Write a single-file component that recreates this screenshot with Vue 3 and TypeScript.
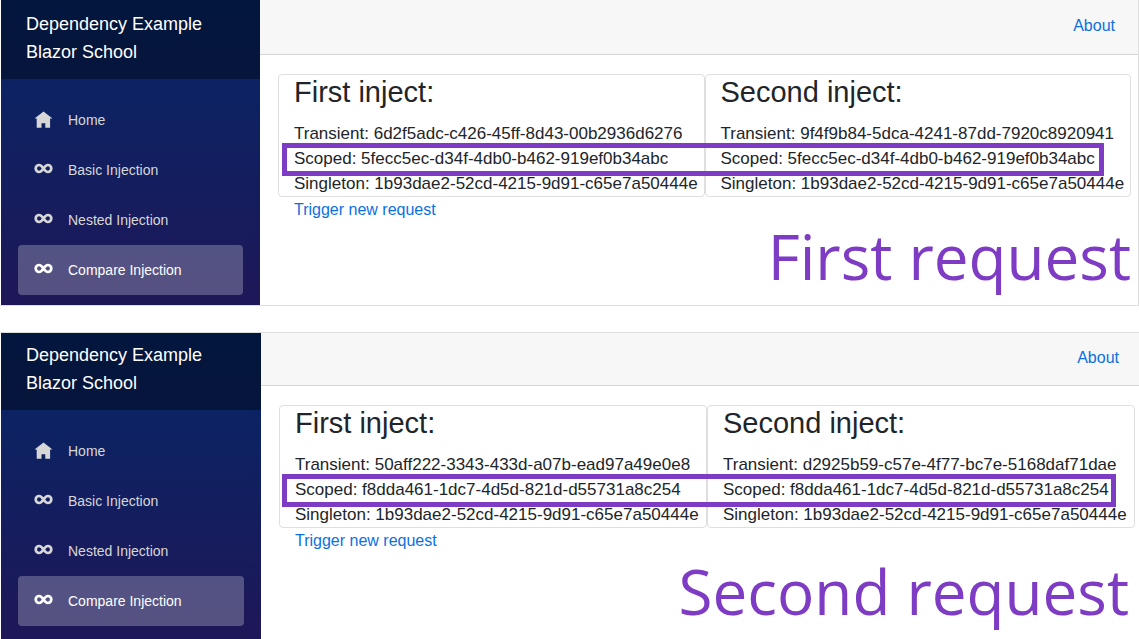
<script setup lang="ts">
interface Entry {
  label: string
  value: string
}
interface Card {
  title: string
  entries: Entry[]
}
interface Panel {
  id: string
  caption: string
  cards: Card[]
}

const singleton = '1b93dae2-52cd-4215-9d91-c65e7a50444e'

function card(title: string, transient: string, scoped: string): Card {
  return {
    title,
    entries: [
      { label: 'Transient', value: transient },
      { label: 'Scoped', value: scoped },
      { label: 'Singleton', value: singleton },
    ],
  }
}

const firstScoped = '5fecc5ec-d34f-4db0-b462-919ef0b34abc'
const secondScoped = 'f8dda461-1dc7-4d5d-821d-d55731a8c254'

const panels: Panel[] = [
  {
    id: 'first',
    caption: 'First request',
    cards: [
      card('First inject:', '6d2f5adc-c426-45ff-8d43-00b2936d6276', firstScoped),
      card('Second inject:', '9f4f9b84-5dca-4241-87dd-7920c8920941', firstScoped),
    ],
  },
  {
    id: 'second',
    caption: 'Second request',
    cards: [
      card('First inject:', '50aff222-3343-433d-a07b-ead97a49e0e8', secondScoped),
      card('Second inject:', 'd2925b59-c57e-4f77-bc7e-5168daf71dae', secondScoped),
    ],
  },
]

const links = [
  { text: 'Home', icon: 'home', active: false },
  { text: 'Basic Injection', icon: 'infinity', active: false },
  { text: 'Nested Injection', icon: 'infinity', active: false },
  { text: 'Compare Injection', icon: 'infinity', active: true },
]
</script>

<template>
  <div class="page">
    <section v-for="panel in panels" :key="panel.id" class="panel" :class="panel.id">
      <aside class="sidebar">
        <a class="brand" href="#">Dependency Example<br />Blazor School</a>
        <nav class="nav">
          <a
            v-for="link in links"
            :key="link.text"
            href="#"
            class="nav-link"
            :class="{ active: link.active }"
          >
            <svg class="icon" viewBox="0 0 19 19" aria-hidden="true">
              <path
                v-if="link.icon === 'home'"
                fill="currentColor"
                d="M9.500 .600 .500 7.600h2.200V16.800h4.800v-4.600h3.800v4.600h4.800V7.600h2.400z"
              />
              <path
                v-else
                fill="none"
                stroke="currentColor"
                stroke-width="2.7"
                d="M9.500 7.500C8 5.300 6.900 4 5.200 4a3.500 3.500 0 0 0 0 7C6.900 11 8 9.700 9.500 7.500C11 5.300 12.100 4 13.800 4a3.500 3.500 0 0 1 0 7C12.100 11 11 9.700 9.500 7.500z"
              />
            </svg>
            <span>{{ link.text }}</span>
          </a>
        </nav>
      </aside>
      <main class="main">
        <header class="top-row"><a href="#">About</a></header>
        <div class="content">
          <div class="cards">
            <article v-for="c in panel.cards" :key="c.title" class="card">
              <h3>{{ c.title }}</h3>
              <div v-for="e in c.entries" :key="e.label" class="entry">{{ e.label }}: {{ e.value }}</div>
            </article>
            <div class="highlight"></div>
          </div>
          <a class="trigger" href="#">Trigger new request</a>
          <p class="caption">{{ panel.caption }}</p>
        </div>
      </main>
    </section>
  </div>
</template>

<style>
body {
  margin: 0;
  background: #fff;
}
</style>

<style scoped>
.page {
  display: flex;
  flex-direction: column;
  gap: 26px;
  height: 100vh;
  overflow: hidden;
  font-family: "Liberation Sans", Arial, sans-serif;
  font-size: 16px;
  line-height: 25px;
  color: #212529;
}
.panel {
  box-sizing: border-box;
  display: flex;
  flex-shrink: 0;
  padding-left: 1px;
}
.first {
  border-right: 1px solid #dedede;
  border-bottom: 1px solid #dedede;
}
.second {
  border-top: 1px solid #dedede;
}
a {
  color: #0c70df;
  text-decoration: none;
}
.sidebar {
  flex: 0 0 259px;
  background: linear-gradient(180deg, #052767 0, #3a0647 640px);
}
.second .sidebar {
  flex-basis: 260px;
}
.brand {
  display: block;
  box-sizing: border-box;
  padding: 10px 25px 13px;
  background: rgba(0, 0, 0, 0.4);
  color: #fff;
  font-size: 18px;
  line-height: 28px;
}
.second .brand {
  padding-top: 8px;
}
.nav {
  padding: 16px 17px 10px;
}
.second .nav {
  padding-bottom: 16px;
}
.nav-link {
  display: flex;
  align-items: center;
  gap: 15px;
  height: 50px;
  padding: 0 16px;
  border-radius: 4px;
  color: #d7d7d7;
  font-size: 14px;
}
.active {
  background: rgba(255, 255, 255, 0.25);
  color: #fff;
}
.icon {
  width: 19px;
  height: 19px;
}
.main {
  flex: 1;
  min-width: 0;
}
.top-row {
  display: flex;
  box-sizing: border-box;
  align-items: center;
  justify-content: flex-end;
  height: 55px;
  padding: 0 23px 4px 0;
  background: #f7f7f7;
  border-bottom: 1px solid #d6d5d5;
}
.second .top-row {
  height: 53px;
  padding-right: 20px;
}
.content {
  padding: 19px 7px 0 18px;
}
.second .content {
  padding-right: 4px;
}
.cards {
  position: relative;
  display: grid;
  grid-template-columns: 1fr 1fr;
}
.card {
  min-width: 0;
  border: 1px solid #dfdfdf;
  border-radius: 4px;
  padding-left: 15px;
  white-space: nowrap;
}
h3 {
  margin: 0 0 11px;
  font-size: 29px;
  line-height: 35px;
  font-weight: 400;
}
.entry {
  font-size: 17px;
}
.highlight {
  position: absolute;
  top: 69px;
  left: 4px;
  right: 27px;
  height: 23px;
  border: 5px solid #7e3bc4;
}
.second .highlight {
  left: 3px;
  right: 19px;
}
.trigger {
  display: inline-block;
  margin-left: 16px;
}
.caption {
  margin: 0;
  color: #7e3bc4;
  font-family: "Open Sans", "Noto Sans", sans-serif;
  font-size: 62px;
  line-height: 68px;
  text-align: right;
  white-space: nowrap;
}
.second .caption {
  padding: 4px 6px 0 0;
}
</style>
